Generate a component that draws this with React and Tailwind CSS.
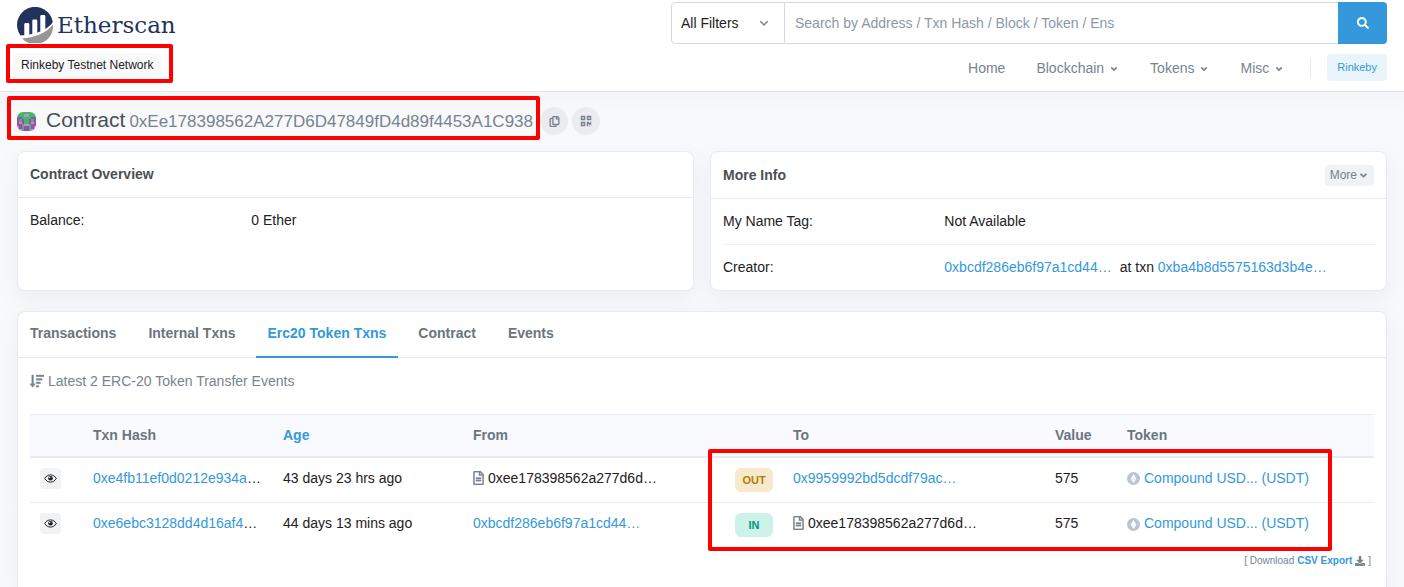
import React from 'react';
import clsx from 'clsx';
import {
  FaAngleDown,
  FaDownload,
  FaQrcode,
  FaRegCopy,
  FaRegFileAlt,
  FaSearch,
  FaSortAmountDown,
} from 'react-icons/fa';

const navItems = [
  { label: 'Home', menu: false },
  { label: 'Blockchain', menu: true },
  { label: 'Tokens', menu: true },
  { label: 'Misc', menu: true },
];

const tabs = ['Transactions', 'Internal Txns', 'Erc20 Token Txns', 'Contract', 'Events'];

const contractAddress = '0xee178398562a277d6d…';

const transfers = [
  {
    hash: '0xe4fb11ef0d0212e934a',
    age: '43 days 23 hrs ago',
    from: contractAddress,
    direction: 'OUT',
    to: '0x9959992bd5dcdf79ac…',
    value: '575',
  },
  {
    hash: '0xe6ebc3128dd4d16af4',
    age: '44 days 13 mins ago',
    from: '0xbcdf286eb6f97a1cd44…',
    direction: 'IN',
    to: contractAddress,
    value: '575',
  },
];

// one letter per cell: g = green, p = pink, v = violet
const avatarRows = ['gggggggg', 'gggppggg', 'vvggggvv', 'vgvggvgv', 'vpvggvpv', 'vvgppgvv', 'pvgvvgvp', 'gpgvvgpg'];
const avatarColors = { g: '#3dbb6c', p: '#cf8ac0', v: '#a347b8' };

const Highlight = ({ className }) => (
  <div className={clsx('pointer-events-none absolute z-10 rounded-xs border-4 border-[#ff0000]', className)} />
);

const Logo = () => (
  <a href="#home" className="flex items-center gap-1 text-[#21325b]">
    <svg width="36" height="36" viewBox="0 0 36 36" aria-hidden="true">
      <path d="M3.500 28.500A18 18 0 1 1 35.800 15C32 21.500 20 28 3.500 28.500z" fill="#21325b" />
      <g fill="#fff">
        <rect x="7.300" y="16" width="5" height="14" rx="1.300" />
        <rect x="15.300" y="12.500" width="5" height="16" rx="1.300" />
        <rect x="23.300" y="8" width="5" height="17" rx="1.300" />
      </g>
      <path d="M5 31.500C17 31 29.500 26 36 17.500A18 18 0 0 1 5 31.500z" fill="#979695" />
    </svg>
    <span className="font-['DejaVu_Serif',serif] text-[23px] leading-9">Etherscan</span>
  </a>
);

const Avatar = () => (
  <svg width="19" height="19" viewBox="0 0 8 8" className="rounded-md" shapeRendering="crispEdges" aria-hidden="true">
    {avatarRows.map((row, y) =>
      row.split('').map((cell, x) => (
        <rect key={`${x}-${y}`} x={x} y={y} width="1" height="1" fill={avatarColors[cell]} />
      ))
    )}
  </svg>
);

const EyeIcon = () => (
  <svg width="13" height="11" viewBox="0 0 13 11" aria-hidden="true">
    <path d="M.7 5.500C2 3.200 4.100 1.900 6.500 1.900s4.500 1.300 5.800 3.600C11 7.800 8.900 9.100 6.500 9.100S2 7.800.7 5.500z" fill="none" stroke="currentColor" strokeWidth="1" />
    <circle cx="6.500" cy="5.200" r="2.300" fill="currentColor" />
    <circle cx="5.700" cy="4.500" r=".7" fill="#fff" />
  </svg>
);

const TokenIcon = () => (
  <svg width="13" height="13" viewBox="0 0 12 12" className="mt-[2px] shrink-0" aria-hidden="true">
    <circle cx="6" cy="6" r="6" fill="#bcc4cf" />
    <path d="M6 1.800 8.700 6.200 6 10.200 3.300 6.200z" fill="#fff" />
    <path d="M3.300 6.200 6 7.600l2.700-1.400" fill="none" stroke="#d8dde4" strokeWidth=".5" />
  </svg>
);

const AddressCell = ({ address }) => {
  if (address === contractAddress) {
    return (
      <span className="flex items-center gap-1">
        <FaRegFileAlt className="h-[14px] w-[11px] shrink-0 text-[#77838f]" stroke="currentColor" strokeWidth={10} />
        {address}
      </span>
    );
  }
  return <a href="#address" className="text-[#3498db]">{address}</a>;
};

const Header = () => (
  <header className="flex items-start justify-between border-b border-[#e4e8ee] bg-white px-[17px] pb-[10px]">
    <div className="shrink-0 pt-[7px]">
      <Logo />
      <div className="relative mt-[10px] -ml-1 inline-block rounded-md bg-[#f8f9fa] px-2 text-xs leading-6">
        Rinkeby Testnet Network
        <Highlight className="-top-[9px] -right-[11px] -bottom-[6px] -left-[7px]" />
      </div>
    </div>

    <div className="flex w-[716px] flex-col">
      <form className="mt-[2px] flex h-[42px]" onSubmit={(e) => e.preventDefault()}>
        <div className="relative w-[114px] shrink-0">
          <select
            aria-label="Filter"
            className="h-full w-full appearance-none rounded-l border border-[#d5dae2] bg-white pl-[9px] text-sm"
          >
            <option>All Filters</option>
          </select>
          <svg
            width="10"
            height="7"
            viewBox="0 0 10 7"
            className="pointer-events-none absolute top-[18px] right-4"
            fill="none"
            stroke="#77838f"
            strokeWidth="1.500"
            aria-hidden="true"
          >
            <path d="M1.300 1.300 5 5l3.700-3.700" />
          </svg>
        </div>
        <input
          type="text"
          aria-label="Search"
          placeholder="Search by Address / Txn Hash / Block / Token / Ens"
          className="min-w-0 flex-1 border-y border-[#d5dae2] px-[10px] text-sm placeholder:text-[#8c98a4]"
        />
        <button
          type="submit"
          aria-label="Search"
          className="flex w-[49px] items-center justify-center rounded-r bg-[#3498db] text-white"
        >
          <FaSearch size={12} />
        </button>
      </form>

      <nav className="mt-[10px] flex items-center justify-end text-sm text-[#77838f]">
        <div className="flex gap-[31px]">
          {navItems.map((item) => (
            <a key={item.label} href="#nav" className="flex items-center gap-[5px] leading-5">
              {item.label}
              {item.menu && <FaAngleDown size={10} className="mt-[2px]" />}
            </a>
          ))}
        </div>
        <span className="mr-4 ml-[26px] h-5 w-px bg-[#e7eaf3]" />
        <button className="rounded bg-[#e9f4fb] px-[10px] text-[11px] leading-[27px] text-[#3498db]">Rinkeby</button>
      </nav>
    </div>
  </header>
);

const Card = ({ children, className }) => (
  <section className={clsx('border border-[#e7eaf3] bg-white shadow-[0_8px_20px_rgba(140,152,164,0.1)]', className)}>
    {children}
  </section>
);

const InfoRow = ({ label, children }) => (
  <div className="grid grid-cols-[34%_1fr] py-3 leading-[21px]">
    <dt>{label}</dt>
    <dd>{children}</dd>
  </div>
);

export default function App() {
  return (
    <div className="flex min-h-screen flex-col bg-[#f8f9fb] font-['Liberation_Sans',Arial,sans-serif] text-sm text-[#1e2022]">
      <Header />

      <main className="flex flex-1 flex-col bg-linear-to-b from-[#f3f5f8] to-[#f8f9fb] to-5% px-[17px]">
        {/* Title */}
        <div className="flex items-center gap-[7px] pt-2">
          <div className="relative flex items-center py-1">
            <Avatar />
            <h1 className="ml-[10px] flex items-baseline gap-1 text-[21px] leading-8 text-[#4a4f55]">
              Contract
              <span className="text-[17px] text-[#77838f]">0xEe178398562A277D6D47849fD4d89f4453A1C938</span>
            </h1>
            <Highlight className="-top-1 -right-[7px] bottom-[2px] -left-[10px]" />
          </div>
          <div className="flex gap-1">
            <button aria-label="Copy address" className="flex size-7 items-center justify-center rounded-full bg-[#ebecf0] text-[#77838f]">
              <FaRegCopy size={11} stroke="currentColor" strokeWidth={14} />
            </button>
            <button aria-label="Show QR code" className="flex size-7 items-center justify-center rounded-full bg-[#ebecf0] text-[#77838f]">
              <FaQrcode size={12} />
            </button>
          </div>
        </div>

        {/* Overview cards */}
        <div className="mt-[9px] grid grid-cols-2 gap-4">
          <Card className="rounded-lg">
            <h2 className="border-b border-[#e7eaf3] px-3 py-3 leading-[21px] font-bold text-[#4a4f55]">Contract Overview</h2>
            <dl className="px-3">
              <InfoRow label="Balance:">0 Ether</InfoRow>
            </dl>
          </Card>
          <Card className="rounded-lg">
            <div className="flex items-center justify-between border-b border-[#e7eaf3] px-3 py-3">
              <h2 className="leading-[22px] font-bold text-[#4a4f55]">More Info</h2>
              <button className="flex items-center gap-px rounded bg-[#f1f2f4] px-[5px] text-xs leading-[21px] text-[#77838f]">
                More
                <FaAngleDown size={11} />
              </button>
            </div>
            <dl className="divide-y divide-[#eceef5] px-3">
              <InfoRow label="My Name Tag:">Not Available</InfoRow>
              <InfoRow label="Creator:">
                <a href="#creator" className="mr-2 text-[#3498db]">0xbcdf286eb6f97a1cd44…</a>
                at txn <a href="#txn" className="text-[#3498db]">0xba4b8d5575163d3b4e…</a>
              </InfoRow>
            </dl>
          </Card>
        </div>

        {/* Transfers */}
        <Card className="mt-5 flex-1 rounded-t-lg border-b-0">
          <div role="tablist" className="flex gap-2 border-b border-[#e7eaf3]">
            {tabs.map((tab) => (
              <button
                key={tab}
                role="tab"
                aria-selected={tab === 'Erc20 Token Txns'}
                className={clsx(
                  '-mb-px border-b-2 px-3 pt-[11px] pb-[13px] leading-5 font-bold',
                  tab === 'Erc20 Token Txns' ? 'border-[#3498db] text-[#3498db]' : 'border-transparent text-[#6c757d]'
                )}
              >
                {tab}
              </button>
            ))}
          </div>

          <div className="px-3 pt-[13px]">
            <p className="flex items-center gap-1 leading-5 text-[#77838f]">
              <FaSortAmountDown size={14} stroke="currentColor" strokeWidth={12} />
              Latest 2 ERC-20 Token Transfer Events
            </p>

            <div className="relative mt-[23px]">
              <table className="w-full table-fixed border-collapse text-left">
                <thead className="bg-[#f8fafd] text-[#6c757d]">
                  <tr className="h-[42px] border-t border-b-2 border-[#e7eaf3]">
                    <th className="w-[53px]" />
                    <th className="w-[190px] px-[10px]">Txn Hash</th>
                    <th className="w-[190px] px-[10px] text-[#3498db]">Age</th>
                    <th className="w-[262px] px-[10px]">From</th>
                    <th className="w-[58px]" />
                    <th className="w-[262px] px-[10px]">To</th>
                    <th className="w-[72px] px-[10px]">Value</th>
                    <th className="px-[10px]">Token</th>
                  </tr>
                </thead>
                <tbody className="divide-y divide-[#e7eaf3]">
                  {transfers.map((row) => (
                    <tr key={row.hash} className="h-[46px] align-top">
                      <td className="px-[10px] pt-[10px]">
                        <button aria-label="View details" className="flex size-[21px] items-center justify-center rounded bg-[#f1f2f4]">
                          <EyeIcon />
                        </button>
                      </td>
                      <td className="px-[10px] pt-[10px]">
                        <a href="#txn" className="text-[#3498db]">{row.hash}</a>…
                      </td>
                      <td className="px-[10px] pt-[10px]">{row.age}</td>
                      <td className="px-[10px] pt-[10px]"><AddressCell address={row.from} /></td>
                      <td className="px-[10px] pt-[10px]">
                        <span
                          className={clsx(
                            'block w-[38px] rounded-md text-center text-[11px] leading-6 font-bold',
                            row.direction === 'OUT' ? 'bg-[#f8e9cc] text-[#b47d00]' : 'bg-[#ccf2ea] text-[#02977e]'
                          )}
                        >
                          {row.direction}
                        </span>
                      </td>
                      <td className="px-[10px] pt-[10px]"><AddressCell address={row.to} /></td>
                      <td className="px-[10px] pt-[10px]">{row.value}</td>
                      <td className="px-[10px] pt-[10px]">
                        <a href="#token" className="flex items-center gap-1 text-[#3498db]">
                          <TokenIcon />
                          Compound USD... (USDT)
                        </a>
                      </td>
                    </tr>
                  ))}
                </tbody>
              </table>
              <Highlight className="top-[35px] -bottom-[2px] left-[678px] w-[624px]" />
            </div>

            <p className="mt-[2px] flex items-center justify-end gap-[3px] pr-[3px] text-[10px] leading-5 text-[#77838f]">
              [ Download
              <a href="#export" className="font-bold text-[#3498db]">CSV Export</a>
              <FaDownload size={10} />
              ]
            </p>
          </div>
        </Card>
      </main>
    </div>
  );
}
